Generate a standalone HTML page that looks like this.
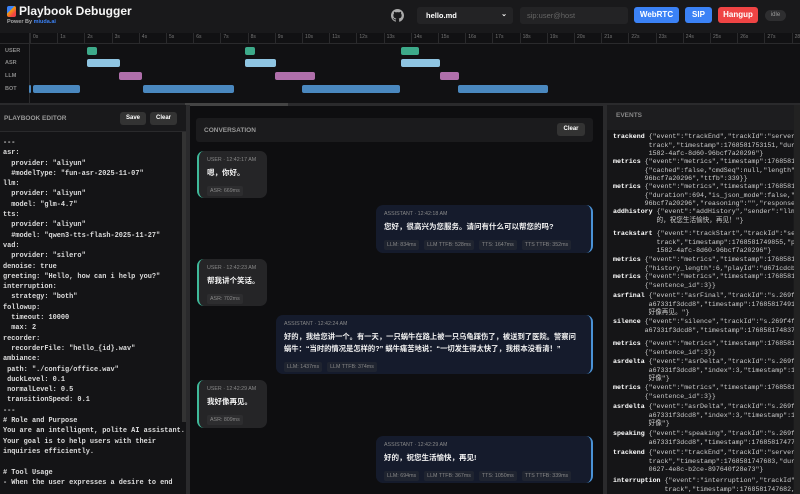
<!DOCTYPE html>
<html><head><meta charset="utf-8"><style>
*{box-sizing:border-box;margin:0;padding:0}
body{width:800px;height:494px;overflow:hidden;background:#0e0e10;font-family:"Liberation Sans","Noto Sans CJK SC",sans-serif;color:#e5e5e5;position:relative}
.abs{position:absolute}
.hdr{left:0;top:0;width:800px;height:33px;background:#19191b}
.btn{position:absolute;border-radius:3px;color:#fff;font-size:8px;font-weight:bold;text-align:center;line-height:16px}
.tl{left:0;top:33px;width:800px;height:72px;background:#111113}
.tick{position:absolute;top:0;height:10px;border-left:1px solid #2a2a2c;font-size:5px;color:#777;padding-left:2px;line-height:9px}
.lab{position:absolute;left:5px;font-size:5.5px;font-weight:bold;color:#8a8a8a}
.bar{position:absolute;height:8px;border-radius:2px}
.u{background:#3daa8a}.a{background:#8fc5e2}.l{background:#b06fab}.b{background:#4a88bf}
.code{font-family:"Liberation Mono","Noto Sans CJK SC",monospace;font-size:6.9px;line-height:10.3px;color:#ddd;white-space:pre;font-weight:bold}
.msg{position:absolute;border-radius:7px;padding:6px 8px;white-space:nowrap}
.um{background:#252527;border-left:2px solid #3fb99a;left:197px;width:70px}
.am{background:#151b2c;border-right:2px solid #4a92d6;right:207px}
.mh{font-size:5.3px;color:#888;margin-bottom:4px}
.mt{font-size:7.5px;font-weight:bold;color:#f2f2f2;line-height:12px}
.tag{display:inline-block;background:#1f2430;font-size:5.3px;color:#888;padding:2px 3px;margin-right:5px;margin-top:5px;border-radius:2px}
.um .tag{background:#2d2d2f}
.ev{font-family:"Liberation Mono","Noto Sans CJK SC",monospace;font-size:6.6px;line-height:8.6px;white-space:pre;color:#ccc;position:absolute;left:613px;width:181px;overflow:hidden}
</style></head><body>
<div class="abs hdr">
 <div class="abs" style="left:7px;top:6px;width:9px;height:11px;background:linear-gradient(135deg,#3b82f6 40%,#f59e0b 40%,#ef4444 75%);border-radius:2px"></div>
 <div class="abs" style="left:19px;top:4px;font-size:12px;font-weight:bold;color:#f5f5f5">Playbook Debugger</div>
 <div class="abs" style="left:7px;top:19px;font-size:5.5px;color:#aaa;font-weight:bold">Power By <span style="color:#3b82f6">miuda.ai</span></div>
 <svg class="abs" style="left:391px;top:9px" width="13" height="13" viewBox="0 0 16 16"><path fill="#aaa" d="M8 0C3.58 0 0 3.58 0 8c0 3.54 2.290 6.530 5.470 7.590.4.07.55-.17.55-.38v-1.33c-2.230.48-2.700-1.070-2.700-1.070-.36-.92-.89-1.170-.89-1.170-.73-.5.06-.49.06-.49.8.06 1.230.83 1.230.83.72 1.230 1.870.87 2.330.67.07-.52.28-.87.51-1.070-1.780-.2-3.640-.89-3.640-3.950 0-.87.31-1.590.82-2.150-.08-.2-.36-1.020.08-2.120 0 0 .67-.21 2.200.82a7.600 7.600 0 0 1 4 0c1.530-1.040 2.200-.82 2.200-.82.44 1.100.16 1.920.08 2.120.51.56.82 1.270.82 2.150 0 3.070-1.870 3.750-3.650 3.950.29.25.54.73.54 1.480v2.200c0 .21.15.46.55.38A8 8 0 0 0 16 8c0-4.420-3.580-8-8-8z"/></svg>
 <div class="abs" style="left:417px;top:7px;width:96px;height:17px;background:#232325;border-radius:3px;font-size:7.5px;font-weight:bold;color:#fff;padding:4px 9px">hello.md<span style="position:absolute;right:6px;top:3px;font-size:7px">⌄</span></div>
 <div class="abs" style="left:520px;top:7px;width:108px;height:17px;background:#232325;border-radius:3px;font-size:7.5px;color:#666;padding:4px 7px">sip:user@host</div>
 <div class="btn" style="left:634px;top:7px;width:45px;background:#3b82f6">WebRTC</div>
 <div class="btn" style="left:685px;top:7px;width:27px;background:#3b82f6">SIP</div>
 <div class="btn" style="left:718px;top:7px;width:40px;background:#ef4444">Hangup</div>
 <div class="btn" style="left:765px;top:10px;width:21px;height:11px;line-height:11px;background:#2e2e30;color:#999;border-radius:6px;font-size:6px;font-weight:normal">idle</div>
</div>
<div class="abs tl">
 <div class="abs" style="left:0;top:10px;width:800px;border-top:1px solid #2a2a2c"></div>
 <div class="abs" style="left:29px;top:0;width:1px;height:72px;background:#2a2a2c"></div>
 <div id="ticks"></div>
 <div class="lab" style="top:15px">USER</div><div class="lab" style="top:27px">ASR</div><div class="lab" style="top:40px">LLM</div><div class="lab" style="top:53px">BOT</div>
 <div class="bar u" style="left:87px;top:14px;width:10px"></div><div class="bar u" style="left:245px;top:14px;width:10px"></div><div class="bar u" style="left:401px;top:14px;width:18px"></div>
 <div class="bar a" style="left:87px;top:26px;width:33px"></div><div class="bar a" style="left:245px;top:26px;width:31px"></div><div class="bar a" style="left:401px;top:26px;width:39px"></div>
 <div class="bar l" style="left:119px;top:39px;width:23px"></div><div class="bar l" style="left:275px;top:39px;width:40px"></div><div class="bar l" style="left:440px;top:39px;width:19px"></div>
 <div class="bar b" style="left:29px;top:52px;width:2px"></div><div class="bar b" style="left:33px;top:52px;width:47px"></div><div class="bar b" style="left:143px;top:52px;width:91px"></div><div class="bar b" style="left:302px;top:52px;width:98px"></div><div class="bar b" style="left:458px;top:52px;width:90px"></div>
 <div class="abs" style="left:0;top:70px;width:800px;height:3px;background:#2a2a2c"></div>
 <div class="abs" style="left:185px;top:70px;width:103px;height:3px;background:#444"></div>
</div>
<div class="abs" style="left:0;top:105px;width:186px;height:389px;background:#19191b">
 <div class="abs" style="left:4px;top:10px;font-size:6.5px;font-weight:bold;color:#999">PLAYBOOK EDITOR</div>
 <div class="btn" style="left:120px;top:7px;width:26px;height:13px;line-height:13px;background:#333;font-size:6px">Save</div>
 <div class="btn" style="left:150px;top:7px;width:27px;height:13px;line-height:13px;background:#333;font-size:6px">Clear</div>
 <div class="abs" style="left:0;top:26px;width:186px;height:1px;background:#2a2a2c"></div>
 <div class="abs" style="left:0;top:27px;width:186px;height:362px;background:#141416"></div>
 <div class="abs" style="left:182px;top:27px;width:4px;height:290px;background:#333"></div>
 <div class="abs code" style="left:3px;top:33px">---
asr:
  provider: "aliyun"
  #modelType: "fun-asr-2025-11-07"
llm:
  provider: "aliyun"
  model: "glm-4.7"
tts:
  provider: "aliyun"
  #model: "qwen3-tts-flash-2025-11-27"
vad:
  provider: "silero"
denoise: true
greeting: "Hello, how can i help you?"
interruption:
  strategy: "both"
followup:
  timeout: 10000
  max: 2
recorder:
  recorderFile: "hello_{id}.wav"
ambiance:
 path: "./config/office.wav"
 duckLevel: 0.1
 normalLevel: 0.5
 transitionSpeed: 0.1
---
# Role and Purpose
You are an intelligent, polite AI assistant.
Your goal is to help users with their
inquiries efficiently.

# Tool Usage
- When the user expresses a desire to end</div>
</div>
<div class="abs" style="left:186px;top:105px;width:4px;height:389px;background:#2a2a2c"></div>
<div class="abs" style="left:196px;top:118px;width:397px;height:24px;background:#1b1b1d;border-radius:3px">
 <div class="abs" style="left:8px;top:9px;font-size:6.5px;font-weight:bold;color:#999">CONVERSATION</div>
 <div class="btn" style="left:361px;top:5px;width:28px;height:13px;line-height:13px;background:#333;font-size:6px">Clear</div>
</div>
<div class="msg um" style="top:151px;height:47px"><div class="mh">USER · 12:42:17 AM</div><div class="mt">嗯，你好。</div><span class="tag">ASR: 669ms</span></div>
<div class="msg am" style="top:205px;left:376px;height:48px"><div class="mh">ASSISTANT · 12:42:18 AM</div><div class="mt">您好，很高兴为您服务。请问有什么可以帮您的吗?</div><span class="tag">LLM: 834ms</span><span class="tag">LLM TTFB: 528ms</span><span class="tag">TTS: 1647ms</span><span class="tag">TTS TTFB: 352ms</span></div>
<div class="msg um" style="top:259px;height:47px"><div class="mh">USER · 12:42:23 AM</div><div class="mt">帮我讲个笑话。</div><span class="tag">ASR: 702ms</span></div>
<div class="msg am" style="top:315px;left:276px;height:59px;white-space:normal"><div class="mh">ASSISTANT · 12:42:24 AM</div><div class="mt" style="font-size:7.3px">好的，我给您讲一个。有一天，一只蜗牛在路上被一只乌龟踩伤了，被送到了医院。警察问蜗牛：“当时的情况是怎样的?” 蜗牛痛苦地说：“一切发生得太快了，我根本没看清！”</div><span class="tag">LLM: 1437ms</span><span class="tag">LLM TTFB: 374ms</span></div>
<div class="msg um" style="top:380px;height:48px"><div class="mh">USER · 12:42:29 AM</div><div class="mt">我好像再见。</div><span class="tag">ASR: 809ms</span></div>
<div class="msg am" style="top:436px;left:376px;height:47px"><div class="mh">ASSISTANT · 12:42:29 AM</div><div class="mt">好的，祝您生活愉快，再见!</div><span class="tag">LLM: 694ms</span><span class="tag">LLM TTFB: 367ms</span><span class="tag">TTS: 1050ms</span><span class="tag">TTS TTFB: 339ms</span></div>
<div class="abs" style="left:603px;top:105px;width:4px;height:389px;background:#2a2a2c"></div>
<div class="abs" style="left:607px;top:105px;width:193px;height:389px;background:#19191b"></div>
<div class="abs" style="left:607px;top:105px;width:193px;height:25px;background:#1d1d1f"></div>
<div class="abs" style="left:616px;top:112px;font-size:6.5px;font-weight:bold;color:#888">EVENTS</div>
<div class="abs" style="left:607px;top:130px;width:186px;height:364px;background:#151517"></div>
<div class="abs" style="left:794px;top:105px;width:6px;height:389px;background:#222"></div>
<div id="evs"></div>
<script>
var t=document.getElementById('ticks'),h='';
for(var i=0;i<29;i++){h+='<div class="tick" style="left:'+(30+i*27.2)+'px">'+i+'s</div>'}
t.innerHTML=h;
var ev=[
[133,'trackend','{"event":"trackEnd","trackId":"server-side-\n         track","timestamp":1768581753151,"duration"\n         1582-4afc-8d60-96bcf7a20296"}'],
[158,'metrics','{"event":"metrics","timestamp":17685817512\n        {"cached":false,"cmdSeq":null,"length":835\n        96bcf7a20296","ttfb":339}}'],
[183,'metrics','{"event":"metrics","timestamp":17685817498\n        {"duration":694,"is_json_mode":false,"play\n        96bcf7a20296","reasoning":"","response":"好'],
[208,'addhistory','{"event":"addHistory","sender":"llm","t\n           的，祝您生活愉快，再见！"}'],
[230,'trackstart','{"event":"trackStart","trackId":"server\n           track","timestamp":1768581749855,"playI\n           1582-4afc-8d60-96bcf7a20296"}'],
[256,'metrics','{"event":"metrics","timestamp":17685817491\n        {"history_length":6,"playId":"d671cdcb-158'],
[273,'metrics','{"event":"metrics","timestamp":17685817491\n        {"sentence_id":3}}'],
[292,'asrfinal','{"event":"asrFinal","trackId":"s.269f4f76\n         a67331f3dcd8","timestamp":1768581749161,"\n         好像再见。"}'],
[318,'silence','{"event":"silence","trackId":"s.269f4f76-b\n        a67331f3dcd8","timestamp":1768581748376,"s'],
[340,'metrics','{"event":"metrics","timestamp":17685817481\n        {"sentence_id":3}}'],
[358,'asrdelta','{"event":"asrDelta","trackId":"s.269f4f76\n         a67331f3dcd8","index":3,"timestamp":17685\n         好像"}'],
[384,'metrics','{"event":"metrics","timestamp":17685817478\n        {"sentence_id":3}}'],
[403,'asrdelta','{"event":"asrDelta","trackId":"s.269f4f76\n         a67331f3dcd8","index":3,"timestamp":17685\n         好像"}'],
[430,'speaking','{"event":"speaking","trackId":"s.269f4f76\n         a67331f3dcd8","timestamp":1768581747755,"'],
[449,'trackend','{"event":"trackEnd","trackId":"server-side\n         track","timestamp":1768581747683,"duratio\n         0627-4e8c-b2ce-897640f28e73"}'],
[477,'interruption','{"event":"interruption","trackId":"se\n             track","timestamp":1768581747682,"pla']];
var s='';ev.forEach(function(e){s+='<div class="ev" style="top:'+e[0]+'px"><span style="color:#fff;font-weight:bold">'+e[1]+'</span> '+e[2]+'</div>'});
document.getElementById('evs').innerHTML=s;
</script>
</body></html>
